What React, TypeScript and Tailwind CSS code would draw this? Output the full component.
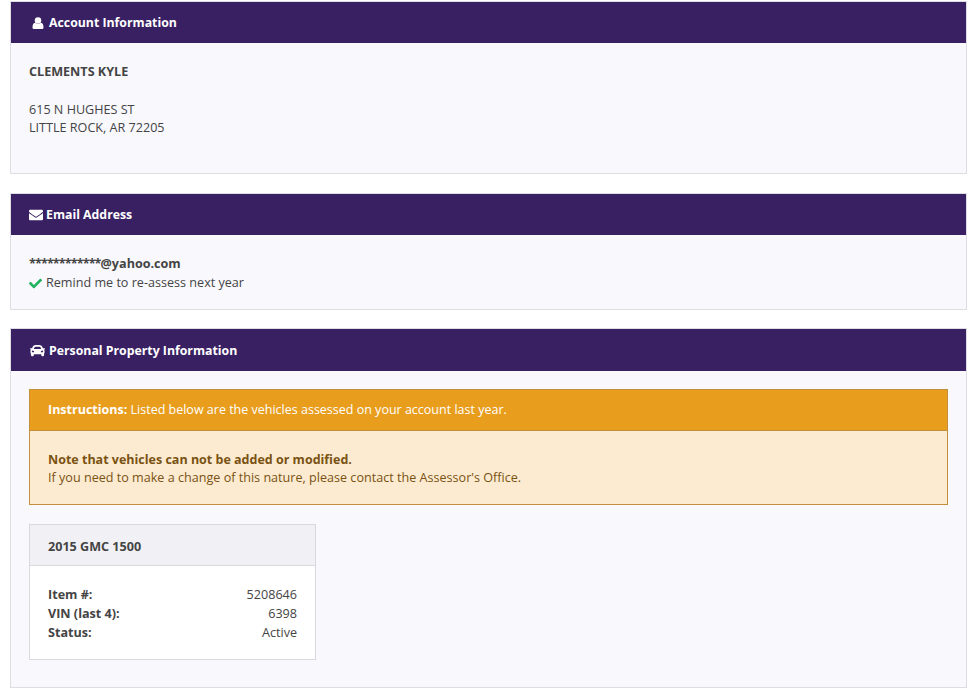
import { FaEnvelope, FaCar, FaCheck } from 'react-icons/fa';

function UserIcon() {
  return (
    <svg viewBox="0 0 24 24" className="mr-[5px] h-[12px] w-[12px]" fill="currentColor">
      <circle cx="12" cy="7" r="6.5" />
      <path d="M1 21C1 15 3 11.500 6.500 11.500C9 14.500 15 14.500 17.500 11.500C21 11.500 23 15 23 21C23 23 21.500 24 20 24H4C2.500 24 1 23 1 21Z" />
    </svg>
  );
}

function Panel({ icon, title, headerClass, children }: { icon: React.ReactNode; title: string; headerClass?: string; children: React.ReactNode }) {
  return (
    <div className="border border-[#dddde3] bg-[#f8f8fd]">
      <div className={`flex h-[41px] items-center bg-[#392063] text-[12.3px] font-bold text-white ${headerClass ?? ''}`}>
        {icon}
        <span>{title}</span>
      </div>
      {children}
    </div>
  );
}

export default function App() {
  return (
    <div className="min-h-[689px] bg-white pl-[10px] pr-[4px] pt-px font-['Open_Sans',sans-serif] text-[12.6px] leading-[18px] text-[#444444]">
      <Panel icon={<UserIcon />} title="Account Information" headerClass="pl-[21px]">
        <div className="h-[130px] px-[18px] pt-[20px]">
          <div className="font-bold">CLEMENTS KYLE</div>
          <div className="mt-[20px]">615 N HUGHES ST</div>
          <div>LITTLE ROCK, AR 72205</div>
        </div>
      </Panel>

      <div className="mt-[19px]">
        <Panel icon={<FaEnvelope className="mr-[3px] h-[14px] w-[14px]" />} title="Email Address" headerClass="pl-[18px]">
          <div className="h-[74px] px-[18px] pt-[20px]">
            <div className="font-bold">
              <span className="tracking-[-0.9px]">************</span>@yahoo.com
            </div>
            <div className="mt-px flex items-center">
              <FaCheck className="mr-[4px] h-[13px] w-[13px] text-[#22b35e]" />
              <span>Remind me to re-assess next year</span>
            </div>
          </div>
        </Panel>
      </div>

      <div className="mt-[18px]">
        <Panel icon={<FaCar className="mr-[4px] h-[15px] w-[15px]" />} title="Personal Property Information" headerClass="pl-[19px] pt-px h-[42px]">
          <div className="h-[316px] px-[18px] pt-[18px]">
            <div className="border border-[#c48f3c] bg-[#fcebd0]">
              <div className="flex h-[41px] items-center border-b border-[#c48f3c] bg-[#e89d1c] px-[18px] text-[12.5px] text-white">
                <span><b>Instructions:</b> Listed below are the vehicles assessed on your account last year.</span>
              </div>
              <div className="h-[73px] px-[18px] pt-[20px] text-[#7a5213]">
                <div className="text-[12.5px] font-bold">Note that vehicles can not be added or modified.</div>
                <div>If you need to make a change of this nature, please contact the Assessor's Office.</div>
              </div>
            </div>

            <div className="mt-[19px] w-[287px] border border-[#d8d8de] bg-white">
              <div className="flex h-[41px] items-center border-b border-[#d8d8de] bg-[#f1f1f5] px-[18px] pt-[3px] font-bold">2015 GMC 1500</div>
              <div className="h-[93px] px-[18px] pt-[19px]">
                <div className="flex justify-between leading-[19px]"><b>Item #:</b><span>5208646</span></div>
                <div className="flex justify-between leading-[19px]"><b>VIN (last 4):</b><span>6398</span></div>
                <div className="flex justify-between leading-[19px]"><b>Status:</b><span>Active</span></div>
              </div>
            </div>
          </div>
        </Panel>
      </div>
    </div>
  );
}
